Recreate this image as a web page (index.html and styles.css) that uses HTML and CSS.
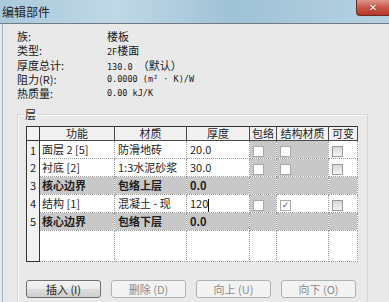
FILE: index.html
```html
<!DOCTYPE html>
<html lang="zh-CN">

<head>
    <meta charset="UTF-8">
    <title>编辑部件</title>
    <link rel="stylesheet" href="styles.css">
</head>

<body>
    <div class="titlebar">
        <span class="title">编辑部件</span>
        <span class="close">✕</span>
    </div>

    <div class="frame">
        <div class="info">
            <span class="label">族:</span><span class="value"><span class="cjk">楼板</span></span>
            <span class="label">类型:</span><span class="value">2F<span class="cjk">楼面</span></span>
            <span class="label">厚度总计:</span><span class="value">130.0 <span class="cjk">（默认）</span></span>
            <span class="label">阻力(R):</span><span class="value">0.0000 (m² · K)/W</span>
            <span class="label">热质量:</span><span class="value">0.00 kJ/K</span>
        </div>

        <fieldset class="layers">
            <legend>层</legend>
            <table class="grid">
                <colgroup>
                    <col style="width: 13px">
                    <col style="width: 75px">
                    <col style="width: 72px">
                    <col style="width: 63px">
                    <col style="width: 27px">
                    <col style="width: 52px">
                    <col style="width: 29px">
                </colgroup>
                <thead>
                    <tr>
                        <th class="num"></th>
                        <th>功能</th>
                        <th>材质</th>
                        <th>厚度</th>
                        <th>包络</th>
                        <th>结构材质</th>
                        <th>可变</th>
                    </tr>
                </thead>
                <tbody>
                    <tr>
                        <td class="num">1</td>
                        <td>面层 2 [5]</td>
                        <td>防滑地砖</td>
                        <td>20.0</td>
                        <td class="gray"><span class="box"></span></td>
                        <td class="gray"><span class="box"></span></td>
                        <td><span class="box off"></span></td>
                    </tr>
                    <tr>
                        <td class="num">2</td>
                        <td>衬底 [2]</td>
                        <td>1:3水泥砂浆</td>
                        <td>30.0</td>
                        <td class="gray"><span class="box"></span></td>
                        <td class="gray"><span class="box"></span></td>
                        <td><span class="box off"></span></td>
                    </tr>
                    <tr class="core">
                        <td class="num">3</td>
                        <td>核心边界</td>
                        <td>包络上层</td>
                        <td>0.0</td>
                        <td></td>
                        <td></td>
                        <td></td>
                    </tr>
                    <tr>
                        <td class="num">4</td>
                        <td>结构 [1]</td>
                        <td>混凝土 - 现</td>
                        <td>120<span class="caret"></span></td>
                        <td class="gray"><span class="box"></span></td>
                        <td><span class="box checked">✓</span></td>
                        <td><span class="box off"></span></td>
                    </tr>
                    <tr class="core">
                        <td class="num">5</td>
                        <td>核心边界</td>
                        <td>包络下层</td>
                        <td>0.0</td>
                        <td></td>
                        <td></td>
                        <td></td>
                    </tr>
                    <tr class="filler">
                        <td class="num"></td>
                        <td></td>
                        <td></td>
                        <td></td>
                        <td></td>
                        <td></td>
                        <td></td>
                    </tr>
                </tbody>
            </table>

            <div class="buttons">
                <button>插入 (I)</button>
                <button disabled>删除 (D)</button>
                <button disabled>向上 (U)</button>
                <button disabled>向下 (O)</button>
            </div>
        </fieldset>
    </div>
</body>

</html>
```

FILE: styles.css
```css
body {
    margin: 0;
    width: 389px;
    height: 302px;
    overflow: hidden;
    background: #e9e9e9;
    font-family: 'Noto Sans CJK SC', sans-serif;
    font-size: 11px;
    color: #1e1e1e;
}

.titlebar {
    height: 23px;
    border-bottom: 1px solid #6f7c86;
    background: linear-gradient(90deg, #a9c9db 0%, #c0d8e6 30%, #9fc2d6 60%, #b6d2e2 100%);
    display: flex;
    justify-content: space-between;
    align-items: flex-start;
}

.title {
    padding: 4px 0 0 2px;
    font-size: 12px;
    line-height: 15px;
    color: #222;
}

.close {
    width: 32px;
    height: 15px;
    border: 1px solid #6e2b22;
    border-top: none;
    border-right: none;
    border-radius: 0 0 0 4px;
    background: linear-gradient(#e0978c, #c8574a 50%, #b7372b);
    color: #fff;
    font-family: 'DejaVu Sans', sans-serif;
    font-size: 10px;
    font-weight: bold;
    line-height: 15px;
    text-align: center;
    text-shadow: 0 0 2px #5a1a12;
}

.frame {
    margin-left: 2px;
    border-left: 1px solid #a4b6c4;
    height: 278px;
    overflow: hidden;
}

.info {
    display: grid;
    grid-template-columns: 90px auto;
    grid-auto-rows: 14.3px;
    padding: 5px 0 0 14px;
    line-height: 14px;
    color: #181818;
}

.info span {
    overflow: hidden;
}

.value {
    font-family: 'DejaVu Sans Mono', monospace;
    font-size: 8.5px;
}

.cjk {
    font-family: 'Noto Sans CJK SC', sans-serif;
    font-size: 11px;
}

.layers {
    margin: 7px 0 0 14px;
    width: 351px;
    height: 200px;
    padding: 5px 0 0 8px;
    box-sizing: border-box;
    border: 1px solid #d6d6d6;
    box-shadow: inset 1px 1px 0 #f8f8f8;
}

.layers legend {
    margin-left: -2px;
    padding: 0 1px;
    font-size: 11px;
    line-height: 14px;
}

.grid {
    width: 331px;
    table-layout: fixed;
    border-collapse: collapse;
    background: #fff;
}

.grid th,
.grid td {
    padding: 0 0 0 3px;
    white-space: nowrap;
    overflow: hidden;
    text-align: left;
    border: 1px dotted #9c9c9c;
}

.grid th {
    height: 13px;
    line-height: 13px;
    padding: 0;
    text-align: center;
    font-weight: normal;
    background: #f1f1f1;
    border: 1px solid #4a4a4a;
    border-top-color: #333;
}

.grid td {
    height: 17px;
    line-height: 17px;
}

.grid td:nth-child(2) {
    padding-left: 2px;
}

.grid .num {
    padding: 0;
    text-align: center;
    background: #f1f1f1;
    border: 1px solid #333;
}

.grid td.num {
    border-top: none;
    border-bottom: none;
}

.grid .gray,
.grid .core td {
    background: #c8c8c8;
}

.grid .core td {
    font-weight: bold;
}

.grid .core td.num {
    background: #f1f1f1;
    font-weight: normal;
}

.grid .filler td {
    height: 30px;
}

.grid .filler td.num {
    border-bottom: 1px solid #333;
}

.caret {
    display: inline-block;
    width: 1px;
    height: 13px;
    vertical-align: middle;
    background: #111;
}

.box {
    display: inline-block;
    width: 9px;
    height: 9px;
    vertical-align: middle;
    border: 1px solid #a8a8a8;
    background: #fff;
    font-family: 'DejaVu Sans', sans-serif;
    font-size: 9px;
    line-height: 9px;
    text-align: center;
    color: #4a5ea8;
}

.box.off {
    border-color: #9a9a9a;
    background: linear-gradient(#d8d8d8, #f4f4f4);
}

.buttons {
    display: flex;
    gap: 10px;
    margin-top: 18px;
}

button {
    width: 75px;
    height: 18px;
    padding: 0;
    font-family: 'Noto Sans CJK SC', sans-serif;
    font-size: 11px;
    line-height: 14px;
    color: #1e1e1e;
    border: 1px solid #707070;
    border-radius: 3px;
    background: linear-gradient(#f3f3f3 0%, #ebebeb 50%, #dddddd 51%, #cfcfcf 100%);
}

button:disabled {
    color: #8a8a8a;
    border-color: #adb2b5;
    background: #f3f3f3;
}
```
